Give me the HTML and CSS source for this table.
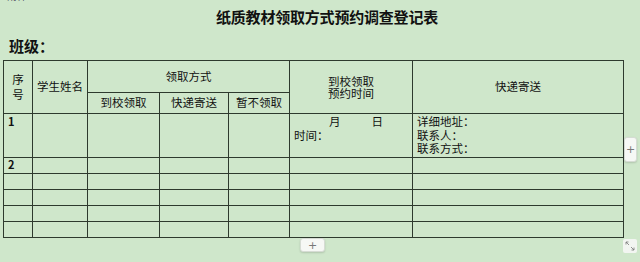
FILE: index.html
```html
<!DOCTYPE html>
<html lang="zh-CN">
<head>
<meta charset="utf-8">
<link rel="stylesheet" href="styles.css">
</head>
<body>
<div class="page">
  <div class="annex">附件</div>
  <h1 class="title">纸质教材领取方式预约调查登记表</h1>
  <div class="class-line">班级：</div>
  <table class="sheet">
    <colgroup>
      <col style="width:29px"><col style="width:55px"><col style="width:72px"><col style="width:69px"><col style="width:61px"><col style="width:123px"><col style="width:211px">
    </colgroup>
    <tr class="h1">
      <td rowspan="2" class="c tall">序<br>号</td>
      <td rowspan="2" class="c">学生姓名</td>
      <td colspan="3" class="c">领取方式</td>
      <td rowspan="2" class="c tight">到校领取<br>预约时间</td>
      <td rowspan="2" class="c">快递寄送</td>
    </tr>
    <tr class="h2">
      <td class="c">到校领取</td>
      <td class="c">快递寄送</td>
      <td class="c">暂不领取</td>
    </tr>
    <tr class="r1">
      <td class="num">1</td>
      <td></td><td></td><td></td><td></td>
      <td class="t"><span class="md"><span class="m">月</span><span>日</span></span><br>时间：</td>
      <td class="t">详细地址：<br>联系人：<br>联系方式：</td>
    </tr>
    <tr class="r"><td class="num">2</td><td></td><td></td><td></td><td></td><td></td><td></td></tr>
    <tr class="r"><td></td><td></td><td></td><td></td><td></td><td></td><td></td></tr>
    <tr class="r"><td></td><td></td><td></td><td></td><td></td><td></td><td></td></tr>
    <tr class="r"><td></td><td></td><td></td><td></td><td></td><td></td><td></td></tr>
    <tr class="r"><td></td><td></td><td></td><td></td><td></td><td></td><td></td></tr>
  </table>
  <div class="btn btn-right">+</div>
  <div class="btn btn-bottom">+</div>
  <div class="resize">
    <svg width="14" height="14" viewBox="0 0 14 14"><path d="M3 3l3 3M3 3v2.5M3 3h2.5M11 11l-3-3M11 11v-2.5M11 11h-2.5" stroke="#777" stroke-width="0.8" fill="none"/></svg>
  </div>
</div>
</body>
</html>
```
FILE: styles.css
```css
html, body {
  margin: 0;
  padding: 0;
  background: #cfe7cb;
}
.page {
  position: relative;
  width: 640px;
  height: 262px;
  overflow: hidden;
  font-family: "Noto Sans CJK SC", "Noto Sans", sans-serif;
  color: #111;
}
.annex {
  font-size: 10px;
  line-height: 12px;
  height: 12px;
  margin-top: -10px;
  padding-left: 7px;
  color: #556;
}
.title {
  margin: 4px 0 0;
  padding-left: 14px;
  text-align: center;
  font-size: 15px;
  line-height: 22px;
  height: 22px;
  font-weight: 700;
  letter-spacing: -0.2px;
}
.class-line {
  margin-top: 9px;
  padding-left: 9px;
  font-size: 15px;
  font-weight: 700;
  line-height: 18px;
  height: 18px;
}
.sheet {
  margin-left: 3px;
  margin-top: 5px;
  border-collapse: collapse;
  table-layout: fixed;
  width: 621px;
  font-size: 11.5px;
  line-height: 13.5px;
}
.sheet td {
  border: 1px solid #2e3a2e;
  padding: 0;
  vertical-align: top;
}
.sheet td.c {
  text-align: center;
  vertical-align: middle;
}
.sheet td.tall { line-height: 15px; }
.sheet td.tight { line-height: 12.5px; }
.h1 td { height: 31px; }
.h2 td { height: 20px; }
.r1 td { height: 41.5px; }
.r td { height: 15.2px; }
.num {
  font-weight: 700;
  font-size: 11px;
  padding: 0 0 0 4px !important;
}
.r1 .num { padding-top: 1px !important; }
.t {
  padding: 1px 0 0 4px !important;
}
.md {
  display: inline-block;
  padding-left: 35px;
}
.md .m { margin-right: 31px; }
.btn {
  position: absolute;
  background: #f6f8f5;
  border: 1px solid #d6dcd4;
  border-radius: 3px;
  box-shadow: 0 1px 2px rgba(0,0,0,0.15);
  color: #777;
  font-size: 11px;
  font-family: "DejaVu Sans", sans-serif;
  display: flex;
  align-items: center;
  justify-content: center;
}
.btn-right {
  left: 624px;
  top: 137px;
  width: 11px;
  height: 23px;
}
.btn-bottom {
  left: 300px;
  top: 238px;
  width: 23px;
  height: 12px;
}
.resize {
  position: absolute;
  left: 623px;
  top: 239px;
  width: 14px;
  height: 14px;
  background: #f2f5f1;
  border-radius: 2px;
}
.resize svg { display: block; }
```
